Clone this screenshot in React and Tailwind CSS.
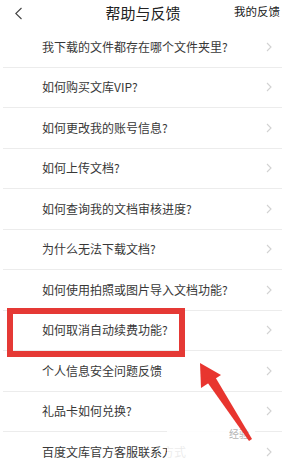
import React from "react";

const questions = [
  "我下载的文件都存在哪个文件夹里?",
  "如何购买文库VIP?",
  "如何更改我的账号信息?",
  "如何上传文档?",
  "如何查询我的文档审核进度?",
  "为什么无法下载文档?",
  "如何使用拍照或图片导入文档功能?",
  "如何取消自动续费功能?",
  "个人信息安全问题反馈",
  "礼品卡如何兑换?",
  "百度文库官方客服联系方式",
];

function Chevron() {
  return (
    <svg width="6" height="10" viewBox="0 0 6 10" fill="none">
      <path d="M1 1l4 4-4 4" stroke="#d2d2d2" strokeWidth="1.1" />
    </svg>
  );
}

function App() {
  return (
    <div
      className="relative w-[282px] h-[469px] overflow-hidden bg-white text-[#383838]"
      style={{ fontFamily: '"Noto Sans CJK SC", "Noto Sans", sans-serif' }}
    >
      {/* header */}
      <div className="relative flex items-center h-[27px]">
        <svg className="ml-[14px]" width="9" height="13" viewBox="0 0 9 13" fill="none">
          <path d="M7.5 1L1.8 6.5l5.7 5.5" stroke="#444" strokeWidth="1.1" />
        </svg>
        <div className="absolute left-0 right-0 text-center text-[15px] leading-none text-[#222] -mt-[3px] pl-[4px]">
          帮助与反馈
        </div>
        <div className="ml-auto mr-[2px] text-[11.5px] leading-none text-[#222] -mt-[3px]">我的反馈</div>
      </div>

      {/* list */}
      <div className="flex flex-col">
        {questions.map((q) => (
          <div key={q} className="ml-[3px] flex items-center h-[40.5px] border-b border-[#ececec] shrink-0">
            <span className="ml-[39px] text-[12px] leading-none">{q}</span>
            <span className="ml-auto mr-[10px] flex">
              <Chevron />
            </span>
          </div>
        ))}
      </div>

      {/* annotation: red box */}
      <div className="absolute left-[7px] top-[308px] w-[178px] h-[49px] border-[6px] border-[#e53935]" />

      {/* watermark */}
      <div className="absolute left-[167px] top-[428px] w-[88px] h-[30px] bg-white/90">
        <span className="absolute right-[6px] top-[1px] text-[10px] text-[#b5b5b5] leading-none">经验</span>
      </div>

      {/* annotation: arrow */}
      <svg className="absolute inset-0 pointer-events-none" width="282" height="469" viewBox="0 0 282 469">
        <polygon points="200,363 201,388 221,375" fill="#e8352f" />
        <polygon points="205,379 214,375 252,439 249,441" fill="#e8352f" />
      </svg>
    </div>
  );
}

export default App;
